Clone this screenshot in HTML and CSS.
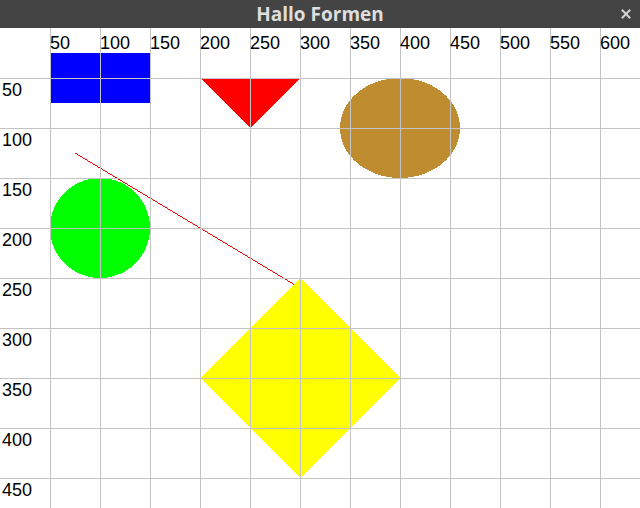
FILE: index.html
```html
<!DOCTYPE html>
<html lang="de">
<head>
<meta charset="utf-8">
<title>Hallo Formen</title>
<link rel="stylesheet" href="styles.css">
</head>
<body>
<div class="window">
  <header class="titlebar">
    <span class="spacer"></span>
    <span class="title">Hallo Formen</span>
    <span class="close" aria-label="Schließen">
      <svg width="10" height="10" viewBox="0 0 10 10"><path d="M1.5 1.5 L8.5 8.5 M8.5 1.5 L1.5 8.5" stroke="#d2d2d2" stroke-width="2" stroke-linecap="square"/></svg>
    </span>
  </header>
  <svg class="canvas" width="640" height="480" viewBox="0 0 640 480">
    <g class="shapes" shape-rendering="crispEdges">
      <rect x="50" y="25" width="100" height="50" fill="#0000ff"/>
      <polygon points="200,50 300,50 250,100" fill="#ff0000"/>
      <ellipse cx="400" cy="100" rx="60" ry="50" fill="#bf8c30"/>
      <circle cx="100" cy="200" r="50" fill="#00ff00"/>
      <line x1="75" y1="125" x2="300" y2="260" stroke="#ff0000" stroke-width="1"/>
      <polygon points="300,250 400,350 300,450 200,350" fill="#ffff00"/>
    </g>
    <g class="grid" stroke="#c3c3c3" stroke-width="1" shape-rendering="crispEdges">
      <line x1="50.5" y1="0" x2="50.5" y2="480"/>
      <line x1="100.5" y1="0" x2="100.5" y2="480"/>
      <line x1="150.5" y1="0" x2="150.5" y2="480"/>
      <line x1="200.5" y1="0" x2="200.5" y2="480"/>
      <line x1="250.5" y1="0" x2="250.5" y2="480"/>
      <line x1="300.5" y1="0" x2="300.5" y2="480"/>
      <line x1="350.5" y1="0" x2="350.5" y2="480"/>
      <line x1="400.5" y1="0" x2="400.5" y2="480"/>
      <line x1="450.5" y1="0" x2="450.5" y2="480"/>
      <line x1="500.5" y1="0" x2="500.5" y2="480"/>
      <line x1="550.5" y1="0" x2="550.5" y2="480"/>
      <line x1="600.5" y1="0" x2="600.5" y2="480"/>
      <line x1="0" y1="50.5" x2="640" y2="50.5"/>
      <line x1="0" y1="100.5" x2="640" y2="100.5"/>
      <line x1="0" y1="150.5" x2="640" y2="150.5"/>
      <line x1="0" y1="200.5" x2="640" y2="200.5"/>
      <line x1="0" y1="250.5" x2="640" y2="250.5"/>
      <line x1="0" y1="300.5" x2="640" y2="300.5"/>
      <line x1="0" y1="350.5" x2="640" y2="350.5"/>
      <line x1="0" y1="400.5" x2="640" y2="400.5"/>
      <line x1="0" y1="450.5" x2="640" y2="450.5"/>
    </g>
    <g class="labels">
      <text x="50" y="20.5">50</text>
      <text x="100" y="20.5">100</text>
      <text x="150" y="20.5">150</text>
      <text x="200" y="20.5">200</text>
      <text x="250" y="20.5">250</text>
      <text x="300" y="20.5">300</text>
      <text x="350" y="20.5">350</text>
      <text x="400" y="20.5">400</text>
      <text x="450" y="20.5">450</text>
      <text x="500" y="20.5">500</text>
      <text x="550" y="20.5">550</text>
      <text x="600" y="20.5">600</text>
      <text x="2" y="67.5">50</text>
      <text x="2" y="117.5">100</text>
      <text x="2" y="167.5">150</text>
      <text x="2" y="217.5">200</text>
      <text x="2" y="267.5">250</text>
      <text x="2" y="317.5">300</text>
      <text x="2" y="367.5">350</text>
      <text x="2" y="417.5">400</text>
      <text x="2" y="467.5">450</text>
    </g>
  </svg>
</div>
</body>
</html>
```
FILE: styles.css
```css
html, body {
  margin: 0;
  padding: 0;
  background: #ffffff;
}

.window {
  width: 640px;
  height: 508px;
  display: flex;
  flex-direction: column;
  overflow: hidden;
  background: #ffffff;
}

.titlebar {
  height: 28px;
  flex: 0 0 28px;
  background: #444444;
  display: grid;
  grid-template-columns: 1fr auto 1fr;
  align-items: center;
}

.title {
  font-family: "Open Sans", "DejaVu Sans", sans-serif;
  font-weight: 700;
  font-size: 19px;
  line-height: 28px;
  color: #dedede;
}

.close {
  justify-self: end;
  display: flex;
  align-items: center;
  justify-content: center;
  width: 10px;
  height: 10px;
  margin-right: 9px;
}

.close svg {
  display: block;
}

.canvas {
  display: block;
  flex: 0 0 480px;
}

.labels text {
  font-family: "Liberation Sans", Arial, sans-serif;
  font-size: 18px;
  fill: #000000;
}
```
